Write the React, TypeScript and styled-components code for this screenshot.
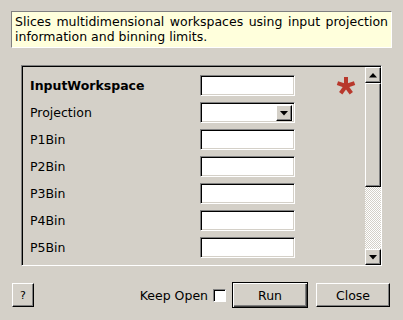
import * as React from "react";
import styled, { createGlobalStyle } from "styled-components";

const BG = "#d4d0c8";

const GlobalStyle = createGlobalStyle`
  html, body {
    margin: 0;
    padding: 0;
    background: ${BG};
  }
  body {
    font-family: "DejaVu Sans", Verdana, sans-serif;
    font-size: 12.5px;
    color: #000;
  }
`;

const PROPS = [
  { name: "InputWorkspace", required: true },
  { name: "Projection", combo: true },
  { name: "P1Bin" },
  { name: "P2Bin" },
  { name: "P3Bin" },
  { name: "P4Bin" },
  { name: "P5Bin" },
];

const App = () => {
  return (
    <Dialog>
      <GlobalStyle />
      <Description>
        Slices multidimensional workspaces using input projection information
        and binning limits.
      </Description>
      <Panel>
        <Rows>
          {PROPS.map((p) => (
            <Row key={p.name}>
              <Label bold={!!p.required}>{p.name}</Label>
              {p.combo ? (
                <Combo>
                  <ComboButton>
                    <svg width="8" height="5" viewBox="0 0 8 5">
                      <polygon points="0,0 8,0 4,4.5" fill="#000" />
                    </svg>
                  </ComboButton>
                </Combo>
              ) : (
                <TextBox />
              )}
              <Marker>
                {p.required && (
                  <svg width="20" height="20" viewBox="-10 -10 20 20">
                    <g stroke="#b8382c" strokeWidth="4" strokeLinecap="butt">
                      {[0, 72, 144, 216, 288].map((a) => (
                        <line
                          key={a}
                          x1="0"
                          y1="0"
                          x2="0"
                          y2="-9"
                          transform={`rotate(${a})`}
                        />
                      ))}
                    </g>
                  </svg>
                )}
              </Marker>
            </Row>
          ))}
        </Rows>
        <ScrollBar>
          <ArrowButton>
            <svg width="8" height="5" viewBox="0 0 8 5">
              <polygon points="0,4.5 8,4.5 4,0" fill="#000" />
            </svg>
          </ArrowButton>
          <Thumb />
          <Trough />
          <ArrowButton>
            <svg width="8" height="5" viewBox="0 0 8 5">
              <polygon points="0,0 8,0 4,4.5" fill="#000" />
            </svg>
          </ArrowButton>
        </ScrollBar>
      </Panel>
      <Footer>
        <HelpButton>?</HelpButton>
        <Spacer />
        <KeepOpen>
          Keep Open
          <CheckBox />
        </KeepOpen>
        <RunButton>Run</RunButton>
        <Button width={74}>Close</Button>
      </Footer>
    </Dialog>
  );
};

export default App;

const Dialog = styled.div`
  width: 403px;
  height: 320px;
  box-sizing: border-box;
  padding: 11px 11px 0 11px;
  display: flex;
  flex-direction: column;
  overflow: hidden;
`;

const Description = styled.div`
  height: 37px;
  box-sizing: border-box;
  background: #ffffdc;
  border-top: 1px solid #808080;
  border-left: 1px solid #808080;
  border-right: 1px solid #ffffff;
  border-bottom: 1px solid #ffffff;
  padding: 2px 3px 0 3px;
  line-height: 15px;
  text-align: justify;
  color: #000;
`;

const Panel = styled.div`
  margin: 17px 10px 0 10px;
  height: 201px;
  box-sizing: border-box;
  border-top: 1px solid #808080;
  border-left: 1px solid #808080;
  border-right: 1px solid #ffffff;
  border-bottom: 1px solid #ffffff;
  box-shadow: inset 1px 1px 0 #000;
  padding: 1px 0 0 1px;
  display: flex;
  overflow: hidden;
`;

const Rows = styled.div`
  flex: 1;
  padding: 8px 0 0 7px;
  display: flex;
  flex-direction: column;
  gap: 6px;
  overflow: hidden;
`;

const Row = styled.div`
  display: flex;
  align-items: center;
  height: 21px;
  flex-shrink: 0;
`;

const Label = styled.div<{ bold: boolean }>`
  width: 170px;
  font-weight: ${(p) => (p.bold ? "bold" : "normal")};
`;

const SunkenField = styled.div`
  width: 95px;
  height: 21px;
  box-sizing: border-box;
  background: #fff;
  border-top: 1px solid #808080;
  border-left: 1px solid #808080;
  border-right: 1px solid #ffffff;
  border-bottom: 1px solid #ffffff;
  box-shadow: inset 1px 1px 0 #000, inset -1px -1px 0 ${BG};
`;

const TextBox = styled(SunkenField)``;

const Combo = styled(SunkenField)`
  display: flex;
  justify-content: flex-end;
  padding: 2px;
`;

const Raised = styled.div`
  box-sizing: border-box;
  background: ${BG};
  border-top: 1px solid #ffffff;
  border-left: 1px solid #ffffff;
  border-right: 1px solid #000;
  border-bottom: 1px solid #000;
  box-shadow: inset -1px -1px 0 #808080;
  display: flex;
  align-items: center;
  justify-content: center;
`;

const ComboButton = styled(Raised)`
  width: 16px;
  height: 16px;
  padding-top: 1px;
`;

const Marker = styled.div`
  flex: 1;
  height: 21px;
  display: flex;
  align-items: center;
  justify-content: flex-end;
  padding-right: 9px;
`;

const ScrollBar = styled.div`
  width: 16px;
  display: flex;
  flex-direction: column;
  flex-shrink: 0;
`;

const ArrowButton = styled(Raised)`
  width: 16px;
  height: 16px;
  flex-shrink: 0;
`;

const Thumb = styled(Raised)`
  height: 104px;
  flex-shrink: 0;
`;

const Trough = styled.div`
  flex: 1;
  background: repeating-conic-gradient(#ffffff 0 25%, ${BG} 0 50%) 0 0 / 2px
    2px;
`;

const Footer = styled.div`
  margin-top: 16px;
  height: 26px;
  display: flex;
  align-items: center;
  padding-left: 1px;
  padding-right: 2px;
`;

const Spacer = styled.div`
  flex: 1;
`;

const Button = styled.button<{ width: number }>`
  width: ${(p) => p.width}px;
  height: 24px;
  box-sizing: border-box;
  margin: 0;
  padding: 0;
  background: ${BG};
  font-family: "DejaVu Sans", Verdana, sans-serif;
  font-size: 12.5px;
  color: #000;
  border-top: 1px solid #ffffff;
  border-left: 1px solid #ffffff;
  border-right: 1px solid #000;
  border-bottom: 1px solid #000;
  box-shadow: inset -1px -1px 0 #808080;
  border-radius: 0;
`;

const HelpButton = styled(Button).attrs({ width: 22 })`
  font-size: 11px;
`;

const RunButton = styled(Button).attrs({ width: 76 })`
  height: 26px;
  margin-right: 8px;
  border: 1px solid #000;
  box-shadow: inset 1px 1px 0 #fff, inset -1px -1px 0 #404040,
    inset -2px -2px 0 #808080;
`;

const KeepOpen = styled.label`
  display: flex;
  align-items: center;
  gap: 5px;
  margin-right: 6px;
`;

const CheckBox = styled.span`
  width: 13px;
  height: 13px;
  box-sizing: border-box;
  background: #fff;
  border-top: 1px solid #808080;
  border-left: 1px solid #808080;
  border-right: 1px solid #ffffff;
  border-bottom: 1px solid #ffffff;
  box-shadow: inset 1px 1px 0 #000;
`;
